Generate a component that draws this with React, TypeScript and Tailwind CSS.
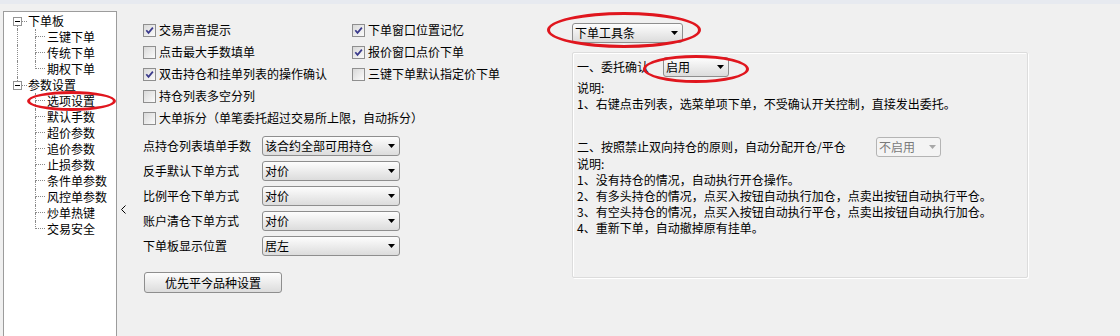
import React from "react";

function Arrow({ disabled }: { disabled?: boolean }) {
  return (
    <svg width="7" height="4" viewBox="0 0 7 4" className="shrink-0">
      <path d="M0 0H7L3.5 4Z" fill={disabled ? "#a8a8a8" : "#000000"} />
    </svg>
  );
}

function Select({
  label,
  className = "",
  disabled,
}: {
  label: string;
  className?: string;
  disabled?: boolean;
}) {
  return (
    <div
      className={`flex h-[20px] shrink-0 items-center justify-between rounded-[3px] border pl-[2px] pr-[4px] ${
        disabled
          ? "border-[#b4b4b4] bg-[#f4f4f4] text-[#7a7a7a]"
          : "border-[#8e8e8e] bg-linear-to-b from-[#fdfdfd] to-[#dcdcdc] text-black"
      } ${className}`}
    >
      <span>{label}</span>
      <Arrow disabled={disabled} />
    </div>
  );
}

function Check({ checked }: { checked?: boolean }) {
  return (
    <div className="flex h-[13px] w-[13px] shrink-0 items-center justify-center border border-[#8f8f8f] bg-linear-to-br from-[#d9d9d9] to-[#fbfbfb]">
      {checked && (
        <svg width="9" height="9" viewBox="0 0 9 9">
          <path d="M1.3 4.3L3.5 6.9L7.9 1.6" fill="none" stroke="#3a3a8c" strokeWidth="1.7" />
        </svg>
      )}
    </div>
  );
}

function CheckRow({ checked, label }: { checked?: boolean; label: string }) {
  return (
    <div className="flex h-[22px] items-center gap-[3px] whitespace-nowrap">
      <Check checked={checked} />
      <span>{label}</span>
    </div>
  );
}

function RootRow({ label, above, below }: { label: string; above?: boolean; below?: boolean }) {
  return (
    <div className="flex h-[16px] items-center">
      <div className="w-[9px] shrink-0" />
      <div className="flex h-full w-[9px] shrink-0 flex-col items-center">
        <div className={`flex-1 ${above ? "border-l border-dotted border-[#8a8a8a]" : ""}`} />
        <div className="flex h-[9px] w-[9px] shrink-0 items-center justify-center border border-[#939393] bg-white">
          <div className="h-px w-[5px] bg-black" />
        </div>
        <div className={`flex-1 ${below ? "border-l border-dotted border-[#8a8a8a]" : ""}`} />
      </div>
      <div className="w-[5px] shrink-0 border-t border-dotted border-[#8a8a8a]" />
      <div className="w-px shrink-0" />
      <span className="whitespace-nowrap">{label}</span>
    </div>
  );
}

function ChildRow({ label, parentLine, last }: { label: string; parentLine?: boolean; last?: boolean }) {
  return (
    <div className="flex h-[16px]">
      <div className="w-[13px] shrink-0" />
      <div className={`w-px shrink-0 ${parentLine ? "border-l border-dotted border-[#8a8a8a]" : ""}`} />
      <div className="w-[17px] shrink-0" />
      <div className="flex w-[10px] shrink-0 flex-col">
        <div className="h-[8px] border-b border-l border-dotted border-[#8a8a8a]" />
        <div className={`flex-1 ${last ? "" : "border-l border-dotted border-[#8a8a8a]"}`} />
      </div>
      <div className="w-[2px] shrink-0" />
      <span className="self-center whitespace-nowrap">{label}</span>
    </div>
  );
}

function LabeledSelect({ label, value }: { label: string; value: string }) {
  return (
    <div className="flex h-[20px] items-center">
      <span className="w-[119px] shrink-0 whitespace-nowrap">{label}</span>
      <Select label={value} className="w-[138px]" />
    </div>
  );
}

export default function App() {
  return (
    <div className="relative h-[336px] w-[1120px] overflow-hidden bg-[#f0f0f0] text-[12px] leading-[16px] text-black [font-family:'Noto_Sans_CJK_SC','Noto_Sans',sans-serif]">
      <div className="h-[4px] bg-[#e7eaf0]" />
      <div className="flex h-[332px] items-start">
        {/* tree */}
        <div className="ml-[3px] mt-[7px] h-[325px] w-[114px] shrink-0 border border-b-0 border-[#9c9c9c] bg-white pt-px">
          <RootRow label="下单板" below />
          <ChildRow label="三键下单" parentLine />
          <ChildRow label="传统下单" parentLine />
          <ChildRow label="期权下单" parentLine last />
          <RootRow label="参数设置" above />
          <ChildRow label="选项设置" />
          <ChildRow label="默认手数" />
          <ChildRow label="超价参数" />
          <ChildRow label="追价参数" />
          <ChildRow label="止损参数" />
          <ChildRow label="条件单参数" />
          <ChildRow label="风控单参数" />
          <ChildRow label="炒单热键" />
          <ChildRow label="交易安全" last />
        </div>

        {/* collapse chevron */}
        <div className="ml-[3px] mt-[201px] shrink-0">
          <svg width="6" height="9" viewBox="0 0 6 9">
            <path d="M5.5 0.5L1.5 4.5L5.5 8.5" fill="none" stroke="#000000" strokeWidth="1" />
          </svg>
        </div>

        {/* left settings */}
        <div className="ml-[17px] flex w-[429px] shrink-0 flex-col pt-[15px]">
          <div className="grid grid-cols-[209px_1fr]">
            <CheckRow checked label="交易声音提示" />
            <CheckRow checked label="下单窗口位置记忆" />
            <CheckRow label="点击最大手数填单" />
            <CheckRow checked label="报价窗口点价下单" />
            <CheckRow checked label="双击持仓和挂单列表的操作确认" />
            <CheckRow label="三键下单默认指定价下单" />
          </div>
          <CheckRow label="持仓列表多空分列" />
          <CheckRow label="大单拆分（单笔委托超过交易所上限，自动拆分）" />

          <div className="mt-[7px] flex flex-col gap-[5px]">
            <LabeledSelect label="点持仓列表填单手数" value="该合约全部可用持仓" />
            <LabeledSelect label="反手默认下单方式" value="对价" />
            <LabeledSelect label="比例平仓下单方式" value="对价" />
            <LabeledSelect label="账户清仓下单方式" value="对价" />
            <LabeledSelect label="下单板显示位置" value="居左" />
          </div>

          <div className="ml-px mt-[16px] flex h-[21px] w-[138px] items-center justify-center rounded-[3px] border border-[#8e8e8e] bg-linear-to-b from-[#fdfdfd] to-[#dcdcdc]">
            优先平今品种设置
          </div>
        </div>

        {/* right settings */}
        <div className="flex shrink-0 flex-col pt-[19px]">
          <Select label="下单工具条" className="w-[111px]" />
          <div className="mt-[9px] h-[226px] w-[456px] rounded-[2px] border border-[#dcdcdc] px-[4px] pt-[4px] shadow-[inset_1px_1px_0_#ffffff,1px_1px_0_#ffffff]">
            <div className="flex h-[20px] items-center">
              <span className="whitespace-nowrap">一、委托确认</span>
              <Select label="启用" className="ml-[14px] w-[66px]" />
            </div>
            <div className="mt-[3px]">说明:</div>
            <div className="whitespace-nowrap">1、右键点击列表，选菜单项下单，不受确认开关控制，直接发出委托。</div>
            <div className="mt-[26px] flex h-[18px] items-center">
              <span className="w-[299px] shrink-0 whitespace-nowrap">二、按照禁止双向持仓的原则，自动分配开仓/平仓</span>
              <Select label="不启用" className="w-[65px]" disabled />
            </div>
            <div>说明:</div>
            <div className="whitespace-nowrap">1、没有持仓的情况，自动执行开仓操作。</div>
            <div className="whitespace-nowrap">2、有多头持仓的情况，点买入按钮自动执行加仓，点卖出按钮自动执行平仓。</div>
            <div className="whitespace-nowrap">3、有空头持仓的情况，点买入按钮自动执行平仓，点卖出按钮自动执行加仓。</div>
            <div className="whitespace-nowrap">4、重新下单，自动撤掉原有挂单。</div>
          </div>
        </div>
      </div>

      {/* red annotation ellipses */}
      <div className="pointer-events-none absolute left-[27px] top-[91px] h-[20px] w-[89px] rounded-[50%] border-[3px] border-[#e0161e]" />
      <div className="pointer-events-none absolute left-[547px] top-[12px] h-[36px] w-[154px] rounded-[50%] border-[3px] border-[#e0161e]" />
      <div className="pointer-events-none absolute left-[643px] top-[55px] h-[28px] w-[106px] rounded-[50%] border-[3px] border-[#e0161e]" />
    </div>
  );
}
